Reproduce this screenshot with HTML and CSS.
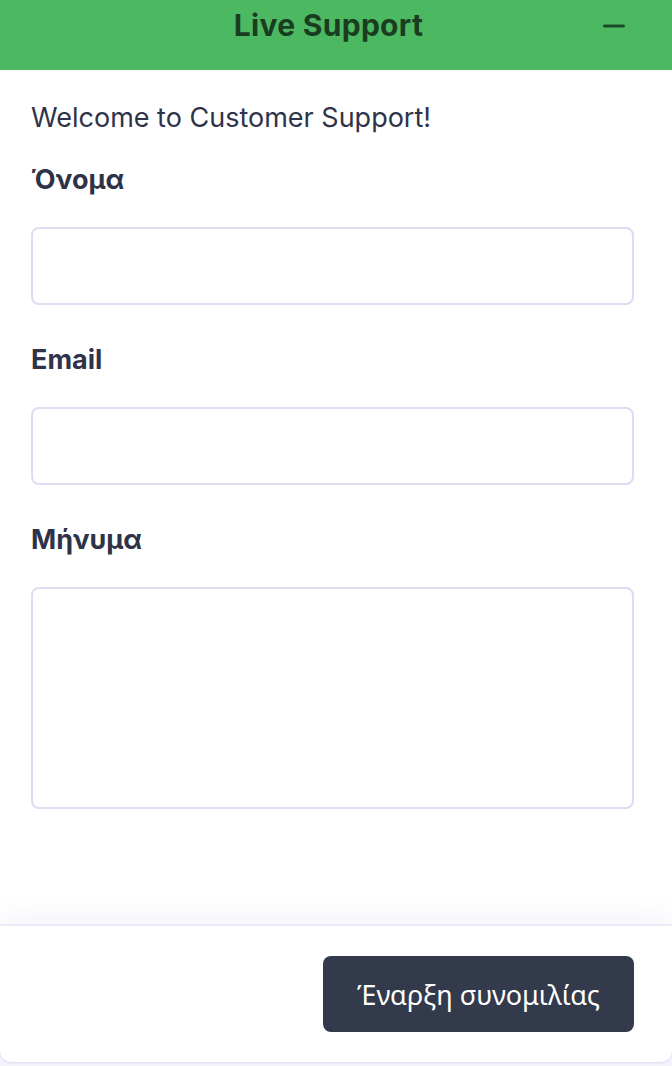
FILE: index.html
```html
<!DOCTYPE html>
<html lang="el">
<head>
<meta charset="utf-8">
<link rel="stylesheet" href="styles.css">
</head>
<body>
<div class="widget">
  <header class="header">
    <h1 class="title">Live Support</h1>
    <button class="minimize" aria-label="Minimize">
      <svg width="22" height="4" viewBox="0 0 22 4"><rect x="0" y="0.5" width="22" height="3" rx="1.5" fill="#1c4a26"/></svg>
    </button>
  </header>
  <main class="content">
    <p class="welcome">Welcome to Customer Support!</p>
    <label class="field">
      <span class="label">Όνομα</span>
      <input class="input" type="text">
    </label>
    <label class="field">
      <span class="label">Email</span>
      <input class="input" type="email">
    </label>
    <label class="field">
      <span class="label">Μήνυμα</span>
      <textarea class="input textarea"></textarea>
    </label>
  </main>
  <footer class="footer">
    <button class="start">Έναρξη συνομιλίας</button>
  </footer>
</div>
</body>
</html>
```

FILE: styles.css
```css
* { box-sizing: border-box; }
html, body { margin: 0; padding: 0; }
body {
  background: #f4f3fb;
  font-family: Inter, "Noto Sans", "Liberation Sans", sans-serif;
  color: #2f3349;
  width: 672px;
  height: 1066px;
  overflow: hidden;
}
.widget {
  width: 672px;
  height: 1062px;
  background: #ffffff;
  border-radius: 0 0 12px 12px;
  display: flex;
  flex-direction: column;
  box-shadow: 0 1px 3px rgba(120, 110, 220, 0.18);
  overflow: hidden;
}
.header {
  height: 70px;
  flex: none;
  background: #4cb862;
  display: flex;
  align-items: center;
  padding: 0 47px 0 54px;
}
.title {
  flex: 1;
  margin: 0;
  text-align: center;
  font-size: 30px;
  letter-spacing: 0.3px;
  font-weight: 700;
  color: #1a3d21;
  line-height: 1;
  padding-bottom: 20px;
}
.minimize {
  border: 0;
  background: transparent;
  padding: 0;
  margin-bottom: 18px;
  display: flex;
}
.content {
  flex: 1;
  padding: 29px 38px 0 31px;
  display: flex;
  flex-direction: column;
}
.welcome {
  margin: 0 0 24px 0;
  font-size: 27px;
  line-height: 38px;
  font-weight: 400;
}
.field {
  display: flex;
  flex-direction: column;
  margin-bottom: 36px;
}
.label {
  font-size: 27px;
  line-height: 38px;
  font-weight: 700;
  margin-bottom: 28px;
}
.input {
  height: 78px;
  border: 2px solid #dedcf2;
  border-radius: 8px;
  background: #fff;
  font: inherit;
  outline: none;
}
.textarea {
  height: 222px;
  resize: none;
}
.footer {
  flex: none;
  border-top: 2px solid #ebe9fa;
  padding: 30px 38px 30px 31px;
  display: flex;
  justify-content: flex-end;
  box-shadow: 0 -8px 24px rgba(120, 110, 200, 0.08);
}
.start {
  width: 311px;
  height: 76px;
  background: #323a4b;
  color: #ffffff;
  border: 0;
  border-radius: 8px;
  font-family: "Noto Sans", Inter, sans-serif;
  font-size: 27px;
  font-weight: 400;
}
```
